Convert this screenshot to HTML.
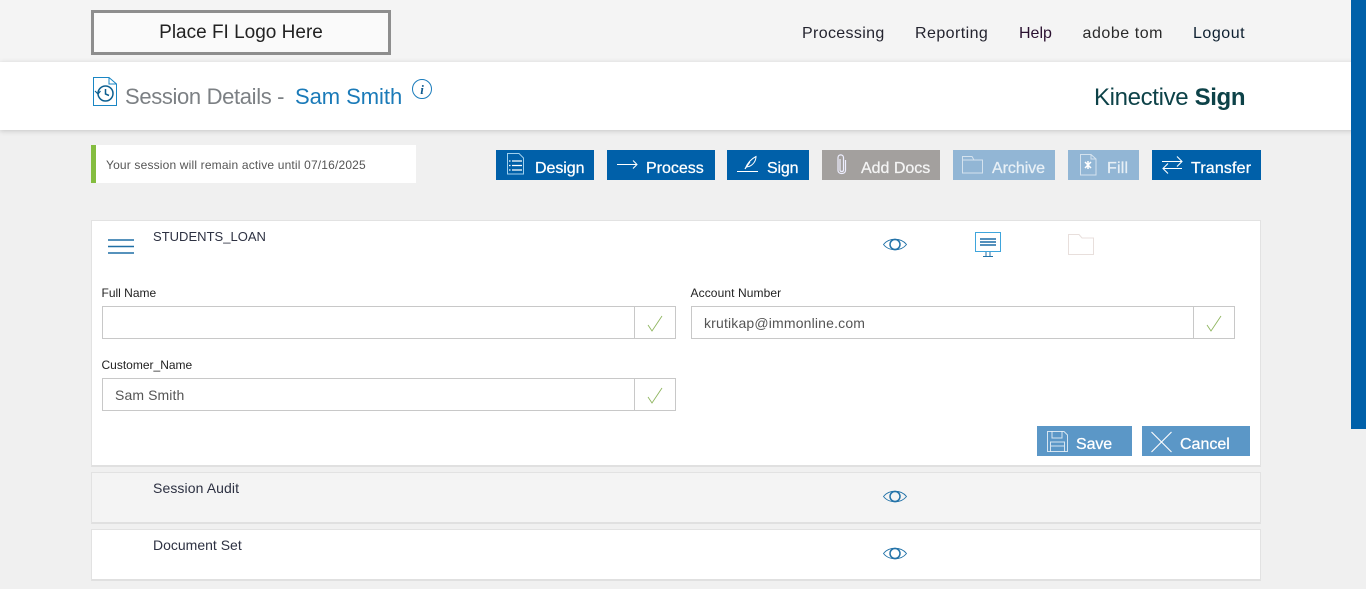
<!DOCTYPE html>
<html><head><meta charset="utf-8">
<style>
html,body{margin:0;padding:0;width:1366px;height:589px;overflow:hidden;background:#f0f0f0;font-family:"Liberation Sans",sans-serif}
.a{position:absolute;white-space:nowrap}
svg{position:absolute;overflow:visible}
.nav{top:24px;font-size:16px;line-height:20px;color:#24242f}
.btn{position:absolute;top:150px;height:30px;color:#fff;font-size:16px;line-height:37px;font-weight:400;-webkit-text-stroke:.25px currentColor}
.btn span{position:absolute;top:0;white-space:nowrap}
.btn svg{fill:none;stroke:#fff}
.card{position:absolute;left:91px;width:1168px;background:#fff;border:1px solid #e2e2e2;border-bottom:2px solid #e0e0e0}
.lbl{font-size:12px;line-height:14px;color:#222}
.inp{position:absolute;height:31px;border:1px solid #c8c8c8;background:#fff;font-size:14px;line-height:33px;color:#555}
.inp span{position:absolute;left:12px;top:0}
.chk{position:absolute;height:31px;width:40px;border:1px solid #c8c8c8;background:#fff}
.ttl{font-size:14px;line-height:16px;color:#2d3142}
</style></head>
<body>
<div class="a" style="left:0;top:0;width:1366px;height:62px;background:#f4f4f4"></div>
<div class="a" style="left:0;top:62px;width:1366px;height:68px;background:#fff;box-shadow:0 1px 5px rgba(0,0,0,.18)"></div>
<div class="a" style="left:1351px;top:0;width:15px;height:429px;background:#0060a9"></div>

<div class="a" style="left:91px;top:10px;width:294px;height:39px;border:3px solid #8e8e8e;background:#fafafa;text-align:center;font-size:19px;line-height:40px;color:#222">Place FI Logo Here</div>

<div class="a nav" style="left:802px;letter-spacing:.35px">Processing</div>
<div class="a nav" style="left:915px;letter-spacing:.43px">Reporting</div>
<div class="a nav" style="left:1019px;letter-spacing:0;color:#2a1030">Help</div>
<div class="a nav" style="left:1082.5px;letter-spacing:.55px;color:#2a2a2a">adobe tom</div>
<div class="a nav" style="left:1193px;letter-spacing:.53px;color:#0e2030">Logout</div>

<svg style="left:93px;top:77px" width="25" height="30" viewBox="0 0 25 30" fill="none" stroke="#1a86c4" stroke-width="1">
<path d="M.5 28.500V.5H16L23.500 7V28.500Z"/><path d="M16 .5V7H23.500"/>
<circle cx="12.500" cy="16.500" r="7.500" stroke="#0d5f90" stroke-width="1.500"/><path d="M12.500 12V17L16 18.500" stroke="#0d5f90" stroke-width="1.500"/><path d="M2 14L5 17L7.500 14" stroke="#0d5f90" stroke-width="1.200"/>
</svg>
<div class="a" style="left:125px;top:84px;font-size:22px;line-height:26px;color:#7c8084;letter-spacing:-.35px">Session Details -</div>
<div class="a" style="left:295px;top:84px;font-size:22px;line-height:26px;color:#1a7ab8;letter-spacing:-.05px">Sam Smith</div>
<svg style="left:412px;top:79px" width="20" height="20" viewBox="0 0 20 20"><circle cx="10" cy="10" r="9.500" fill="none" stroke="#1a7cbc"/><text x="10" y="15" text-anchor="middle" font-family="Liberation Serif" font-style="italic" font-weight="700" font-size="13" fill="#0f5a8e">i</text></svg>

<div class="a" style="left:1094px;top:84px;font-size:24px;line-height:28px;color:#0d4248;letter-spacing:-.35px">Kinective <b>Sign</b></div>

<div class="a" style="left:91px;top:145px;width:320px;height:38px;background:#fff;border-left:5px solid #84bd3f"></div>
<div class="a" style="left:106px;top:157px;font-size:12px;line-height:16px;color:#555;letter-spacing:.17px">Your session will remain active until 07/16/2025</div>

<div class="btn" style="left:496px;width:98px;background:#0060a9"><svg style="left:11px;top:3px" width="18" height="22" viewBox="0 0 18 22" stroke-width="1"><path d="M.5 21V.5H12L16.500 5V21Z" stroke="#9fd0ee"/><path d="M5 8H15M5 12.500H15M5 17H15" stroke-width="1.300"/><path d="M2 8H3.500M2 12.500H3.500M2 17H3.500" stroke-width="1.300"/></svg><span style="left:39px;letter-spacing:-.05px">Design</span></div>
<div class="btn" style="left:607px;width:108px;background:#0060a9"><svg style="left:10px;top:9px" width="21" height="11" viewBox="0 0 21 11" stroke-width="1"><path d="M0 5.500H20M16 1.500L20 5.500L16 9.500"/></svg><span style="left:39px;letter-spacing:0">Process</span></div>
<div class="btn" style="left:727px;width:82px;background:#0060a9"><svg style="left:10px;top:6px" width="22" height="19" viewBox="0 0 22 19" stroke-width="1"><path d="M0 15.500H21" /><path d="M8 13C10 8 14 3 19 .5C19 5 16 9 12 10.500L9 11"/><path d="M8 13L13 6"/></svg><span style="left:40px;letter-spacing:-.15px">Sign</span></div>
<div class="btn" style="left:822px;width:118px;background:#a3a09e"><svg style="left:15px;top:4px" width="10" height="21" viewBox="0 0 10 21" stroke-width="1.200"><path d="M3 5V16C3 18 6.500 18 6.500 16V3.500C6.500 0 1 0 1 3.500V16.500C1 20.500 8.500 20.500 8.500 16.500V6" stroke="#eef"/></svg><span style="left:39px;letter-spacing:-.02px;color:#f4f4f4">Add Docs</span></div>
<div class="btn" style="left:953px;width:102px;background:#92b6d5"><svg style="left:9px;top:6px" width="21" height="18" viewBox="0 0 21 18" stroke-width="1"><path d="M.5 17V.5H10L12 4H20.500V17Z" stroke="#d4e2ee"/><path d="M.5 4H12" stroke="#d4e2ee"/></svg><span style="left:39px;letter-spacing:-.05px;color:#e8f0f6">Archive</span></div>
<div class="btn" style="left:1068px;width:71px;background:#92b6d5"><svg style="left:12px;top:4px" width="17" height="22" viewBox="0 0 17 22" stroke-width="1"><path d="M.5 21V.5H11L16 5V21Z" stroke="#d4e2ee"/><path d="M11 .5V5H16" stroke="#d4e2ee"/><path d="M5 8L11 14M11 8L5 14M8 7V15" stroke-width="1.500"/></svg><span style="left:39px;letter-spacing:.2px;color:#e8f0f6">Fill</span></div>
<div class="btn" style="left:1152px;width:109px;background:#0060a9"><svg style="left:10px;top:6px" width="21" height="18" viewBox="0 0 21 18" stroke-width="1.100"><path d="M0 5.500H20M15 .5L20 5.500L15 10.500"/><path d="M20 12.500H1M6 7.500L1 12.500L6 17.500"/></svg><span style="left:39px;letter-spacing:.15px">Transfer</span></div>

<div class="card" style="top:220px;height:244px"></div>
<svg style="left:108px;top:239px" width="26" height="15" viewBox="0 0 26 15" stroke="#1f6fa5" stroke-width="1.500"><path d="M0 1H26M0 7.500H26M0 14H26"/></svg>
<div class="a ttl" style="left:153px;top:228.500px;font-size:13px;letter-spacing:.02px">STUDENTS_LOAN</div>

<svg style="left:883px;top:237px" width="24" height="15" viewBox="0 0 24 15" fill="none" stroke="#2272a8"><path d="M.5 7.500C6 .5 18 .5 23.500 7.500C18 14.500 6 14.500 .5 7.500Z" stroke-width=".9"/><circle cx="12" cy="7.500" r="5" stroke-width="1.500"/></svg>
<svg style="left:975px;top:232px" width="26" height="25" viewBox="0 0 26 25" fill="none"><path d="M.5.5H25.500V19.500H.5Z" stroke="#3fa5dc"/><path d="M5 7H21M5 10H21M5 13H21" stroke="#1c6ca6" stroke-width="1.500"/><path d="M11 20V24M15 20V24M8 24.500H18" stroke="#2272a8"/></svg>
<svg style="left:1068px;top:234px" width="26" height="21" viewBox="0 0 26 21" fill="none" stroke="#e8dfdc"><path d="M.5 20.500V.5H11L14 4H25.500V20.500Z"/></svg>

<div class="a lbl" style="left:101.500px;top:286px">Full Name</div>
<div class="inp" style="left:102px;top:306px;width:532px"></div>
<div class="chk" style="left:634px;top:306px"></div>
<svg style="left:647px;top:315px" width="16" height="17" viewBox="0 0 16 17" fill="none" stroke="#8eb55e" stroke-width=".9"><path d="M1 10L5 16L15 1"/></svg>

<div class="a lbl" style="left:690.500px;top:286px;letter-spacing:.1px">Account Number</div>
<div class="inp" style="left:691px;top:306px;width:502px"><span style="letter-spacing:.17px">krutikap@immonline.com</span></div>
<div class="chk" style="left:1193px;top:306px"></div>
<svg style="left:1206px;top:315px" width="16" height="17" viewBox="0 0 16 17" fill="none" stroke="#8eb55e" stroke-width=".9"><path d="M1 10L5 16L15 1"/></svg>

<div class="a lbl" style="left:101.500px;top:358px">Customer_Name</div>
<div class="inp" style="left:102px;top:378px;width:532px"><span style="letter-spacing:.1px">Sam Smith</span></div>
<div class="chk" style="left:634px;top:378px"></div>
<svg style="left:647px;top:387px" width="16" height="17" viewBox="0 0 16 17" fill="none" stroke="#8eb55e" stroke-width=".9"><path d="M1 10L5 16L15 1"/></svg>

<div class="btn" style="left:1037px;top:426px;width:95px;background:#5b97c7"><svg style="left:10px;top:5px" width="21" height="21" viewBox="0 0 21 21" stroke-width="1" stroke-opacity=".75"><path d="M.5.5H17L20.500 4V20.500H.5Z"/><path d="M5 .5V7H15V.5M3.500 20.500V11H17.500V20.500M3.500 15H17.500"/></svg><span style="left:39px;letter-spacing:-.1px">Save</span></div>
<div class="btn" style="left:1142px;top:426px;width:108px;background:#5b97c7"><svg style="left:9px;top:6px" width="21" height="20" viewBox="0 0 21 20" stroke-width="1.100"><path d="M.5 0L20.500 20M20.500 0L.5 20"/></svg><span style="left:38px;letter-spacing:0">Cancel</span></div>

<div class="card" style="top:472px;height:49px;background:#f4f4f4"></div>
<div class="a ttl" style="left:153px;top:480px;font-size:14px;letter-spacing:.1px">Session Audit</div>
<svg style="left:883px;top:489px" width="24" height="15" viewBox="0 0 24 15" fill="none" stroke="#2272a8"><path d="M.5 7.500C6 .5 18 .5 23.500 7.500C18 14.500 6 14.500 .5 7.500Z" stroke-width=".9"/><circle cx="12" cy="7.500" r="5" stroke-width="1.500"/></svg>

<div class="card" style="top:529px;height:49px"></div>
<div class="a ttl" style="left:153px;top:537px;font-size:14px">Document Set</div>
<svg style="left:883px;top:546px" width="24" height="15" viewBox="0 0 24 15" fill="none" stroke="#2272a8"><path d="M.5 7.500C6 .5 18 .5 23.500 7.500C18 14.500 6 14.500 .5 7.500Z" stroke-width=".9"/><circle cx="12" cy="7.500" r="5" stroke-width="1.500"/></svg>
</body></html>
